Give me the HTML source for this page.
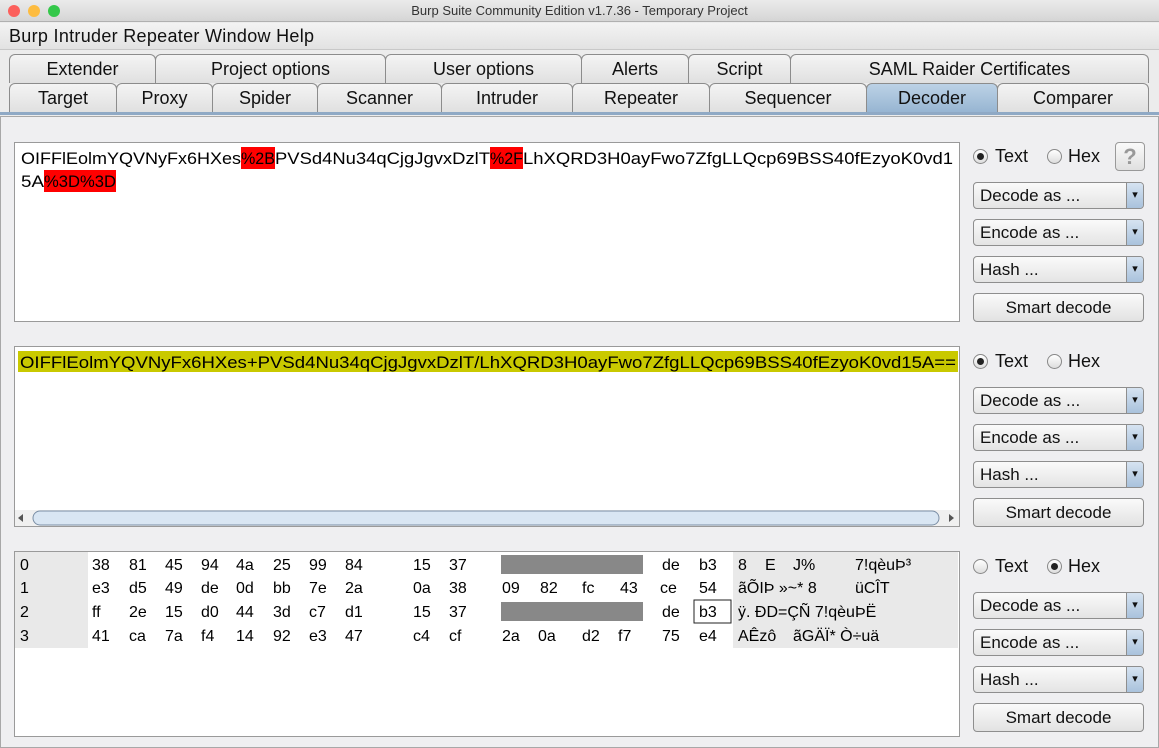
<!DOCTYPE html>
<html><head><meta charset="utf-8"><style>
*{margin:0;padding:0;box-sizing:border-box}
body{width:1159px;height:748px;overflow:hidden;background:#ececec;font-family:"Liberation Sans",sans-serif;position:relative;color:#111}
.a{position:absolute}
.tab{position:absolute;height:29px;border:1px solid #8c8c8c;border-bottom:none;border-radius:6px 6px 0 0;background:linear-gradient(#f4f4f4,#e0e0e0);font-size:18px;text-align:center;line-height:28px;color:#111}
.sel{background:linear-gradient(#bcd2e6,#97b5d2)}
.box{position:absolute;background:#fff;border:1px solid #9a9a9a}
.dd{position:absolute;left:973px;width:171px;height:27px;border:1px solid #8e8e8e;border-radius:4px;background:linear-gradient(#fafafa,#e4e4e4);font-size:17px;line-height:25px;padding-left:6px}
.dd:after{content:"▾";position:absolute;right:0;top:0;width:16px;height:25px;background:linear-gradient(#d6e3f1,#a9c2dc);border-left:1px solid #8e8e8e;font-size:11px;text-align:center;line-height:25px;border-radius:0 3px 3px 0}
.sm{position:absolute;left:973px;width:171px;height:29px;border:1px solid #8e8e8e;border-radius:4px;background:linear-gradient(#fafafa,#e2e2e2);font-size:17px;text-align:center;line-height:27px}
.rad{position:absolute;width:15px;height:15px;border:1px solid #888;border-radius:50%;background:linear-gradient(#fff,#ddd)}
.rad.on:after{content:"";position:absolute;left:3px;top:3px;width:7px;height:7px;border-radius:50%;background:#222}
.lbl{position:absolute;font-size:18px}
</style></head><body>
<div class="a" style="left:0;top:0;width:1159px;height:22px;background:linear-gradient(#ebebeb,#d5d5d5);border-bottom:1px solid #b0b0b0;font-size:13px;text-align:center;line-height:22px;color:#333">Burp Suite Community Edition v1.7.36 - Temporary Project</div>
<div class="a" style="left:8px;top:5px;width:12px;height:12px;border-radius:50%;background:#fc605c"></div>
<div class="a" style="left:28px;top:5px;width:12px;height:12px;border-radius:50%;background:#fdbc40"></div>
<div class="a" style="left:48px;top:5px;width:12px;height:12px;border-radius:50%;background:#34c84a"></div>
<div class="a" style="left:0;top:23px;width:1159px;height:27px;background:linear-gradient(#f3f3f3,#e2e2e2);font-size:18px;line-height:27px;padding-left:9px;border-bottom:1px solid #c8c8c8;letter-spacing:0.3px">Burp Intruder Repeater Window Help</div>
<div class="a" style="left:0;top:51px;width:1159px;height:62px;background:#ececec"></div>
<div class="tab" style="left:9px;top:54px;width:147px">Extender</div>
<div class="tab" style="left:155px;top:54px;width:231px">Project options</div>
<div class="tab" style="left:385px;top:54px;width:197px">User options</div>
<div class="tab" style="left:581px;top:54px;width:108px">Alerts</div>
<div class="tab" style="left:688px;top:54px;width:103px">Script</div>
<div class="tab" style="left:790px;top:54px;width:359px">SAML Raider Certificates</div>
<div class="tab" style="left:9px;top:83px;width:108px">Target</div>
<div class="tab" style="left:116px;top:83px;width:97px">Proxy</div>
<div class="tab" style="left:212px;top:83px;width:106px">Spider</div>
<div class="tab" style="left:317px;top:83px;width:125px">Scanner</div>
<div class="tab" style="left:441px;top:83px;width:132px">Intruder</div>
<div class="tab" style="left:572px;top:83px;width:138px">Repeater</div>
<div class="tab" style="left:709px;top:83px;width:158px">Sequencer</div>
<div class="tab sel" style="left:866px;top:83px;width:132px">Decoder</div>
<div class="tab" style="left:997px;top:83px;width:152px">Comparer</div>
<div class="a" style="left:0;top:112px;width:1159px;height:3px;background:#8fa9c5"></div>
<div class="a" style="left:0;top:116px;width:1159px;height:632px;background:#efeff1;border:1px solid #a8a8a8"></div>

<div class="box" style="left:14px;top:142px;width:946px;height:180px"></div>
<div class="box" style="left:14px;top:346px;width:946px;height:181px"></div>
<div class="box" style="left:14px;top:551px;width:946px;height:186px"></div>

<svg class="a" style="left:0;top:0" width="1159" height="748" font-family="Liberation Sans, sans-serif" font-size="17">
<rect x="241" y="147" width="34" height="22" fill="#f00"/>
<rect x="490" y="147" width="33" height="22" fill="#f00"/>
<rect x="44" y="170" width="72" height="22" fill="#f00"/>
<text y="164"><tspan x="21" textLength="220" lengthAdjust="spacingAndGlyphs">OIFFlEolmYQVNyFx6HXes</tspan></text>
<text y="164" x="241" textLength="34" lengthAdjust="spacingAndGlyphs">%2B</text>
<text y="164" x="275" textLength="215" lengthAdjust="spacingAndGlyphs">PVSd4Nu34qCjgJgvxDzlT</text>
<text y="164" x="490" textLength="33" lengthAdjust="spacingAndGlyphs">%2F</text>
<text y="164" x="523" textLength="430" lengthAdjust="spacingAndGlyphs">LhXQRD3H0ayFwo7ZfgLLQcp69BSS40fEzyoK0vd1</text>
<text y="187" x="21" textLength="23" lengthAdjust="spacingAndGlyphs">5A</text>
<text y="187" x="44" textLength="72" lengthAdjust="spacingAndGlyphs">%3D%3D</text>
<rect x="18" y="351" width="940" height="21" fill="#c9c900"/>
<text y="368" x="20" textLength="936" lengthAdjust="spacingAndGlyphs">OIFFlEolmYQVNyFx6HXes+PVSd4Nu34qCjgJgvxDzlT/LhXQRD3H0ayFwo7ZfgLLQcp69BSS40fEzyoK0vd15A==</text>
<rect x="15" y="510" width="944" height="16" fill="#f0f0f0"/>
<rect x="33" y="511" width="906" height="14" rx="7" fill="#d9e6f3" stroke="#7a8ea5"/>
<path d="M23 514 L18 518 L23 522Z" fill="#555"/><path d="M949 514 L954 518 L949 522Z" fill="#555"/>
<rect x="15" y="552" width="73" height="96" fill="#e9e9e9"/>
<rect x="733" y="552" width="225" height="96" fill="#e9e9e9"/>
<rect x="501" y="555" width="142" height="19" fill="#888"/>
<rect x="501" y="602" width="142" height="19" fill="#888"/>
<rect x="694" y="600" width="37" height="23" fill="none" stroke="#222"/>
<g font-size="16">
<text y="570"><tspan x="20">0</tspan><tspan x="92">38</tspan><tspan x="129">81</tspan><tspan x="165">45</tspan><tspan x="201">94</tspan><tspan x="236">4a</tspan><tspan x="273">25</tspan><tspan x="309">99</tspan><tspan x="345">84</tspan><tspan x="413">15</tspan><tspan x="449">37</tspan><tspan x="662">de</tspan><tspan x="699">b3</tspan><tspan x="738">8</tspan><tspan x="765">E</tspan><tspan x="793">J%</tspan><tspan x="855">7!qèuÞ³</tspan></text>
<text y="593"><tspan x="20">1</tspan><tspan x="92">e3</tspan><tspan x="129">d5</tspan><tspan x="165">49</tspan><tspan x="201">de</tspan><tspan x="236">0d</tspan><tspan x="273">bb</tspan><tspan x="309">7e</tspan><tspan x="345">2a</tspan><tspan x="413">0a</tspan><tspan x="449">38</tspan><tspan x="502">09</tspan><tspan x="540">82</tspan><tspan x="582">fc</tspan><tspan x="620">43</tspan><tspan x="660">ce</tspan><tspan x="699">54</tspan><tspan x="738">ãÕIÞ »~* 8</tspan><tspan x="855">üCÎT</tspan></text>
<text y="617"><tspan x="20">2</tspan><tspan x="92">ff</tspan><tspan x="129">2e</tspan><tspan x="165">15</tspan><tspan x="201">d0</tspan><tspan x="236">44</tspan><tspan x="273">3d</tspan><tspan x="309">c7</tspan><tspan x="345">d1</tspan><tspan x="413">15</tspan><tspan x="449">37</tspan><tspan x="662">de</tspan><tspan x="699">b3</tspan><tspan x="738">ÿ. ÐD=ÇÑ 7!qèuÞË</tspan></text>
<text y="641"><tspan x="20">3</tspan><tspan x="92">41</tspan><tspan x="129">ca</tspan><tspan x="165">7a</tspan><tspan x="201">f4</tspan><tspan x="236">14</tspan><tspan x="273">92</tspan><tspan x="309">e3</tspan><tspan x="345">47</tspan><tspan x="413">c4</tspan><tspan x="449">cf</tspan><tspan x="502">2a</tspan><tspan x="538">0a</tspan><tspan x="582">d2</tspan><tspan x="618">f7</tspan><tspan x="662">75</tspan><tspan x="699">e4</tspan><tspan x="738">AÊzô</tspan><tspan x="793">ãGÄÏ* Ò÷uä</tspan></text>
</g>
</svg>

<div class="rad on" style="left:973px;top:149px"></div><div class="lbl" style="left:995px;top:146px">Text</div>
<div class="rad" style="left:1047px;top:149px"></div><div class="lbl" style="left:1068px;top:146px">Hex</div>
<div class="a" style="left:1115px;top:142px;width:30px;height:29px;border:1px solid #999;border-radius:4px;background:linear-gradient(#fafafa,#e0e0e0);color:#999;font-size:22px;font-weight:bold;text-align:center;line-height:27px">?</div>
<div class="dd" style="top:182px">Decode as ...</div>
<div class="dd" style="top:219px">Encode as ...</div>
<div class="dd" style="top:256px">Hash ...</div>
<div class="sm" style="top:293px">Smart decode</div>
<div class="rad on" style="left:973px;top:354px"></div><div class="lbl" style="left:995px;top:351px">Text</div>
<div class="rad" style="left:1047px;top:354px"></div><div class="lbl" style="left:1068px;top:351px">Hex</div>
<div class="dd" style="top:387px">Decode as ...</div>
<div class="dd" style="top:424px">Encode as ...</div>
<div class="dd" style="top:461px">Hash ...</div>
<div class="sm" style="top:498px">Smart decode</div>
<div class="rad" style="left:973px;top:559px"></div><div class="lbl" style="left:995px;top:556px">Text</div>
<div class="rad on" style="left:1047px;top:559px"></div><div class="lbl" style="left:1068px;top:556px">Hex</div>
<div class="dd" style="top:592px">Decode as ...</div>
<div class="dd" style="top:629px">Encode as ...</div>
<div class="dd" style="top:666px">Hash ...</div>
<div class="sm" style="top:703px">Smart decode</div>
</body></html>
